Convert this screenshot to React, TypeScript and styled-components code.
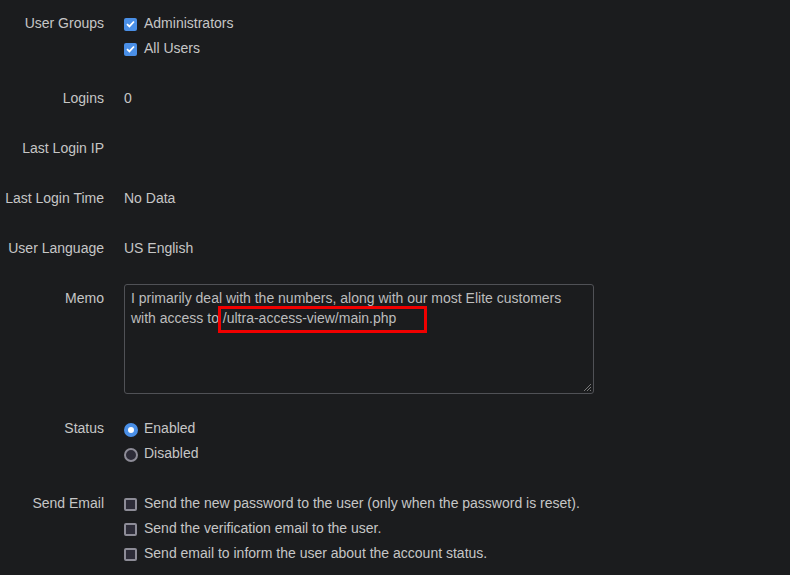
import React from "react";
import styled, { createGlobalStyle } from "styled-components";

const Global = createGlobalStyle`
  html, body { margin: 0; padding: 0; background: #1b1c1e; }
  body { font-family: "Liberation Sans", Arial, sans-serif; font-size: 14px; color: #c6c6c6; }
`;

const Form = styled.div`
  padding-top: 11px;
  width: 790px;
  height: 575px;
  overflow: hidden;
  box-sizing: border-box;
`;

const Row = styled.div<{ $gap?: number }>`
  display: grid;
  grid-template-columns: 104px 1fr;
  column-gap: 20px;
  margin-bottom: ${(p) => (p.$gap ?? 25)}px;
`;

const Label = styled.div`
  text-align: right;
  line-height: 25px;
  white-space: nowrap;
`;

const Value = styled.div`
  display: flex;
  flex-direction: column;
  line-height: 25px;
  min-height: 25px;
`;

const Option = styled.label`
  display: flex;
  align-items: center;
  height: 25px;
  gap: 7px;
  white-space: nowrap;
`;

const Box = styled.span<{ $checked?: boolean }>`
  width: 13px;
  height: 13px;
  box-sizing: border-box;
  border-radius: 2px;
  flex: none;
  display: flex;
  align-items: center;
  justify-content: center;
  margin-top: 1px;
  background: ${(p) => (p.$checked ? "#4a8fe7" : "#2d2c38")};
  border: ${(p) => (p.$checked ? "none" : "2px solid #8d8c97")};
`;

const Radio = styled.span<{ $checked?: boolean }>`
  width: 14px;
  height: 14px;
  box-sizing: border-box;
  border-radius: 50%;
  flex: none;
  margin-top: 2px;
  margin-right: -1px;
  background: ${(p) => (p.$checked ? "#ffffff" : "#2d2c38")};
  border: ${(p) => (p.$checked ? "4px solid #4a8fe7" : "2px solid #8d8c97")};
`;

const MemoWrap = styled.div`
  position: relative;
  width: 470px;
  height: 110px;
  margin-top: -2px;
`;

const Memo = styled.div`
  width: 100%;
  height: 100%;
  box-sizing: border-box;
  border: 1px solid #505156;
  border-radius: 3px;
  padding: 3px 6px;
  line-height: 20px;
  color: #bdbdbd;
  background: #1b1c1e;
`;

const Grip = styled.svg`
  position: absolute;
  right: 2px;
  bottom: 2px;
`;

const Highlight = styled.div`
  position: absolute;
  left: 94px;
  top: 22px;
  width: 209px;
  height: 27px;
  box-sizing: border-box;
  border: 3px solid #f00000;
`;

const Check = () => (
  <svg width="9" height="8" viewBox="0 0 9 8">
    <path d="M1 4.2 L3.4 6.4 L8 1.5" fill="none" stroke="#fff" strokeWidth="1.8" />
  </svg>
);

export default function App() {
  return (
    <>
      <Global />
      <Form>
        <Row>
          <Label>User Groups</Label>
          <Value>
            <Option><Box $checked><Check /></Box>Administrators</Option>
            <Option><Box $checked><Check /></Box>All Users</Option>
          </Value>
        </Row>
        <Row>
          <Label>Logins</Label>
          <Value>0</Value>
        </Row>
        <Row>
          <Label>Last Login IP</Label>
          <Value></Value>
        </Row>
        <Row>
          <Label>Last Login Time</Label>
          <Value>No Data</Value>
        </Row>
        <Row>
          <Label>User Language</Label>
          <Value>US English</Value>
        </Row>
        <Row $gap={22}>
          <Label>Memo</Label>
          <MemoWrap>
            <Memo>
              I primarily deal with the numbers, along with our most Elite customers
              with access to /ultra-access-view/main.php
            </Memo>
            <Highlight />
            <Grip width="9" height="9" viewBox="0 0 9 9">
              <path d="M8 1 L1 8 M8 4 L4 8 M8 7 L7 8" stroke="#777" strokeWidth="1" />
            </Grip>
          </MemoWrap>
        </Row>
        <Row>
          <Label>Status</Label>
          <Value>
            <Option><Radio $checked />Enabled</Option>
            <Option><Radio />Disabled</Option>
          </Value>
        </Row>
        <Row>
          <Label>Send Email</Label>
          <Value>
            <Option><Box />Send the new password to the user (only when the password is reset).</Option>
            <Option><Box />Send the verification email to the user.</Option>
            <Option><Box />Send email to inform the user about the account status.</Option>
          </Value>
        </Row>
      </Form>
    </>
  );
}
